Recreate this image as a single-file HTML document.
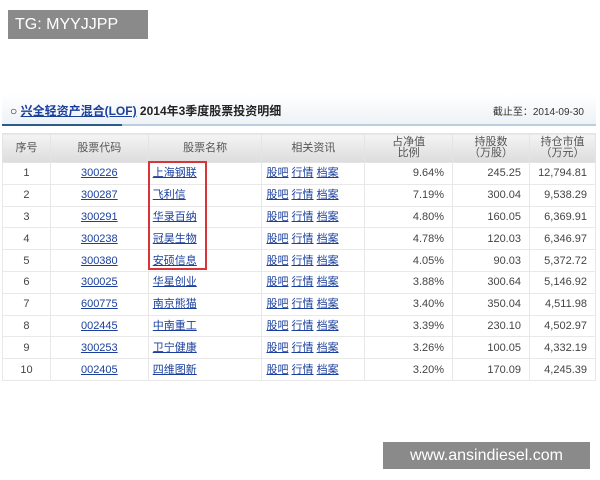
<!DOCTYPE html><html><head><meta charset="utf-8"><style>
body{margin:0;width:600px;height:480px;background:#fff;position:relative;font-family:"Liberation Sans","Noto Sans CJK SC",sans-serif;overflow:hidden}
.tg{position:absolute;left:8px;top:10px;width:140px;height:29px;background:#8a8a8a;color:#fff;font-size:16px;line-height:29px;padding-left:7px;box-sizing:border-box}
.wm{position:absolute;left:383px;top:442px;width:207px;height:27px;background:#8a8a8a;color:#fff;font-size:16px;line-height:27px;text-align:center}
.hd{position:absolute;left:2px;top:94px;width:594px;height:32px;background:linear-gradient(#fff,#eef2f6);border-bottom:2px solid #b9cfe0;box-sizing:border-box}
.hd .u{position:absolute;left:0;bottom:-2px;width:120px;height:2px;background:#2a5c8a}
.hd .t{position:absolute;left:8px;top:8px;font-size:12px;font-weight:bold;color:#222}
.hd .t a{color:#1a3f9c;text-decoration:underline}
.hd .d{position:absolute;right:12px;top:9px;font-size:10px;color:#333}
table{position:absolute;left:2px;top:133px;width:594px;border-collapse:collapse;font-size:11px;color:#444}
th{height:26px;background:linear-gradient(#f4f4f4,#dcdcdc);font-weight:normal;color:#555;border:1px solid #e4e4e4;line-height:11px;font-size:11px}
td{height:20.8px;border:1px solid #e8e8e8;text-align:center;padding:0;line-height:14px;vertical-align:middle}
td.r{text-align:right;padding-right:8px}
td a{color:#1a3f9c;text-decoration:underline}
td.l{text-align:left;padding-left:4px}
.box{position:absolute;left:148px;top:161px;width:59px;height:109px;border:2px solid #d9343a;box-sizing:border-box}
</style></head><body>
<div class="tg">TG: MYYJJPP</div>
<div class="hd"><div class="u"></div><div class="t">○ <a>兴全轻资产混合(LOF)</a> 2014年3季度股票投资明细</div><div class="d">截止至：2014-09-30</div></div>
<table>
<colgroup><col style="width:48px"><col style="width:98px"><col style="width:114px"><col style="width:103px"><col style="width:88px"><col style="width:77px"><col style="width:66px"></colgroup>
<tr><th>序号</th><th>股票代码</th><th>股票名称</th><th>相关资讯</th><th>占净值<br>比例</th><th>持股数<br>（万股）</th><th>持仓市值<br>（万元）</th></tr>
<tr><td>1</td><td><a>300226</a></td><td class="l"><a>上海钢联</a></td><td class="l"><a>股吧</a> <a>行情</a> <a>档案</a></td><td class="r">9.64%</td><td class="r">245.25</td><td class="r">12,794.81</td></tr>
<tr><td>2</td><td><a>300287</a></td><td class="l"><a>飞利信</a></td><td class="l"><a>股吧</a> <a>行情</a> <a>档案</a></td><td class="r">7.19%</td><td class="r">300.04</td><td class="r">9,538.29</td></tr>
<tr><td>3</td><td><a>300291</a></td><td class="l"><a>华录百纳</a></td><td class="l"><a>股吧</a> <a>行情</a> <a>档案</a></td><td class="r">4.80%</td><td class="r">160.05</td><td class="r">6,369.91</td></tr>
<tr><td>4</td><td><a>300238</a></td><td class="l"><a>冠昊生物</a></td><td class="l"><a>股吧</a> <a>行情</a> <a>档案</a></td><td class="r">4.78%</td><td class="r">120.03</td><td class="r">6,346.97</td></tr>
<tr><td>5</td><td><a>300380</a></td><td class="l"><a>安硕信息</a></td><td class="l"><a>股吧</a> <a>行情</a> <a>档案</a></td><td class="r">4.05%</td><td class="r">90.03</td><td class="r">5,372.72</td></tr>
<tr><td>6</td><td><a>300025</a></td><td class="l"><a>华星创业</a></td><td class="l"><a>股吧</a> <a>行情</a> <a>档案</a></td><td class="r">3.88%</td><td class="r">300.64</td><td class="r">5,146.92</td></tr>
<tr><td>7</td><td><a>600775</a></td><td class="l"><a>南京熊猫</a></td><td class="l"><a>股吧</a> <a>行情</a> <a>档案</a></td><td class="r">3.40%</td><td class="r">350.04</td><td class="r">4,511.98</td></tr>
<tr><td>8</td><td><a>002445</a></td><td class="l"><a>中南重工</a></td><td class="l"><a>股吧</a> <a>行情</a> <a>档案</a></td><td class="r">3.39%</td><td class="r">230.10</td><td class="r">4,502.97</td></tr>
<tr><td>9</td><td><a>300253</a></td><td class="l"><a>卫宁健康</a></td><td class="l"><a>股吧</a> <a>行情</a> <a>档案</a></td><td class="r">3.26%</td><td class="r">100.05</td><td class="r">4,332.19</td></tr>
<tr><td>10</td><td><a>002405</a></td><td class="l"><a>四维图新</a></td><td class="l"><a>股吧</a> <a>行情</a> <a>档案</a></td><td class="r">3.20%</td><td class="r">170.09</td><td class="r">4,245.39</td></tr>
</table>
<div class="box"></div>
<div class="wm">www.ansindiesel.com</div>
</body></html>
